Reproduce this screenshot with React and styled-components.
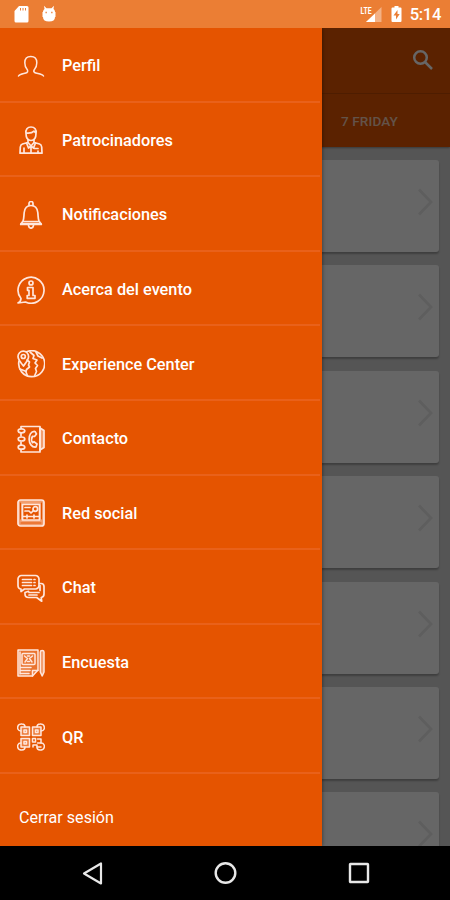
import React from "react"
import styled, { createGlobalStyle } from "styled-components"

const GlobalStyle = createGlobalStyle`
  * {
    box-sizing: border-box;
  }
  body {
    margin: 0;
    background: #000;
    font-family: Roboto, "Liberation Sans", sans-serif;
  }
`

const Screen = styled.div`
  display: flex;
  flex-direction: column;
  width: 450px;
  height: 900px;
  overflow: hidden;
`

const StatusBar = styled.header`
  display: flex;
  flex: none;
  align-items: center;
  justify-content: space-between;
  height: 28px;
  padding: 0 9px 0 13px;
  background: #eb7e34;
  color: white;
`

const StatusGroup = styled.div`
  display: flex;
  align-items: center;
  gap: ${props => props.$gap};
`

const Clock = styled.span`
  font-size: 16.6px;
  font-weight: 500;
  line-height: 20px;
  padding-top: 2px;
  letter-spacing: -0.35px;
`

const Body = styled.div`
  position: relative;
  flex: 1;
  min-height: 0;
  overflow: hidden;
`

const Page = styled.main`
  height: 100%;
  overflow: hidden;
  background: #d5d5d5;
`

const Toolbar = styled.div`
  display: flex;
  align-items: center;
  justify-content: flex-end;
  height: 66px;
  padding: 0 15px 2px;
  background: #e45500;
  border-bottom: 1px solid #c94b00;
`

const TabBar = styled.div`
  display: flex;
  align-items: center;
  justify-content: flex-end;
  height: 53px;
  padding: 0 52px 0 0;
  background: #e45500;
  color: #ffffffb8;
  font-size: 13.6px;
  font-weight: 500;
  letter-spacing: 0.1px;
  box-shadow: 0 1px 2px #0005;
`

const Sessions = styled.div`
  display: flex;
  flex-direction: column;
  gap: 13.4px;
  padding: 13px 11.5px 0;
`

const Card = styled.div`
  display: flex;
  flex: 0 0 92px;
  align-items: center;
  justify-content: flex-end;
  padding: 0 6px 8px 0;
  background: white;
  border-radius: 3px;
  box-shadow: 0 2px 2px #0004;
`

const Scrim = styled.div`
  position: absolute;
  inset: 0;
  background: rgba(0, 0, 0, 0.6);
`

const Drawer = styled.nav`
  position: absolute;
  top: 0;
  bottom: 0;
  left: 0;
  width: 321.5px;
  padding-right: 1.5px;
  background: #e55400;
  color: white;
  box-shadow: 0 0 4px rgba(0, 0, 0, 0.5);
`

const MenuItem = styled.a`
  display: flex;
  align-items: center;
  gap: 17px;
  height: 74.6px;
  padding: 3px 0 0 17px;
  border-bottom: 2px solid #e9611a;
  font-size: 16.3px;
  font-weight: 500;
`

const MenuIcon = styled.svg`
  flex: none;
  width: 28px;
  height: 28px;
  fill: none;
  stroke: #ffe6dc;
  stroke-width: ${props => props.$weight || 1.7};
  stroke-linecap: round;
  stroke-linejoin: round;
`

const Logout = styled.a`
  display: block;
  padding: 34px 19px 0;
  font-size: 16.1px;
  line-height: 20px;
`

const NavBar = styled.footer`
  display: flex;
  flex: 0 0 54px;
  align-items: center;
  justify-content: space-between;
  padding: 0 79px 0 80px;
  background: black;
`

const icons = {
  profile: (
    <path d="M1.500 24c1.500-2.800 6.500-2.200 8.500-3.500 1-.8.8-2.300 0-3.300-1.500-1.700-2.200-3.500-2.200-6.500 0-4 2.200-6.200 6-6.200s6 2.200 6 6.200c0 3-.7 4.800-2.200 6.500-.8 1-1 2.500 0 3.300 2 1.300 7.400.7 8.900 3.500" />
  ),
  sponsor: (
    <>
      <path d="M9 7.500c-.7-4 1.500-6.500 5-6.500s5.800 2.500 5 6.500c0 4-1.800 7-5 7s-5-3-5-7zM9.200 7c3 .3 6.300-.2 7.800-1.800L19 7" />
      <path d="M11 13.500v3l3 3.500 3-3.500v-3M10.800 16.500L5.500 18C4 18.500 3.500 19.500 3.300 21L3 27.200h22L24.700 21c-.2-1.500-.7-2.500-2.200-3l-5.300-1.500M14 20v7M7 22v5M21 25v2M17.500 22.500H21M9.500 17l2 5 2.500-2 2.500 2 2-5" />
    </>
  ),
  bell: (
    <>
      <path d="M12 4V2.500a2 2 0 0 1 4 0V4M6 20c1-2 .8-5 1.200-8.500C7.700 7 10 4.500 14 4.500S20.300 7 20.800 11.500c.4 3.500.2 6.500 1.200 8.500l2.300 3.500H3.700zM6 20.500h16" />
      <path d="M4 22.500h20M11.500 24.500c.3 1.800 1.200 2.700 2.500 2.700s2.200-.9 2.500-2.700" />
    </>
  ),
  info: (
    <>
      <path d="M4 22.500A13 13 0 1 1 8.500 26L1 27c2-1.200 3-2.600 3-4.500z" />
      <circle cx="14" cy="7" r="2" />
      <path d="M10.500 11.500h5.500v8h2v2.800h-7.800v-2.800H12v-5.200h-1.500z" />
    </>
  ),
  globe: (
    <>
      <path d="M9.500 1.800A13 13 0 1 1 2 11" />
      <path d="M6.500 16C3.500 12.500 1 9.500 1 6.500a5.300 5.300 0 0 1 10.600 0c0 3-2.400 6-5.100 9.500z" />
      <circle cx="6.300" cy="6.500" r="2" />
      <path d="M10 10l2.500 2-1 3 1 2-3 2.500-.5 2.500 1.500 4M3 19l5 2M13 2l4 3.500-1 3 4 1.500-2 3 2.500 2.500-2 3 1 3-2 4.500M19 2l2 4 4 2" />
    </>
  ),
  contact: (
    <>
      <path fill="#ffe6dc80" d="M23 3l4 2.500v17L23 25z" />
      <path d="M4 3V1.500h19V27H4v-2M4 8v3M4 17v3" />
      <ellipse cx="4.500" cy="5.800" rx="3.300" ry="2" />
      <ellipse cx="4.500" cy="14" rx="3.300" ry="2" />
      <ellipse cx="4.500" cy="22.200" rx="3.300" ry="2" />
      <path d="M18 6.500c-8-1-8 16.500 1 15.500l1-3-3-2.300-1.500 1c-1.300-2.200-1.300-4.200 0-6.400l2 .2 2-2.500z" />
    </>
  ),
  social: (
    <>
      <path fill="#ffe6dc80" fillRule="evenodd" stroke="none" d="M1 1h26v26H1zM5.500 5.500V21h17V5.500z" />
      <rect x="1" y="1" width="26" height="26" rx="2.500" />
      <rect x="5.500" y="5.500" width="17" height="15.500" />
      <circle cx="18.300" cy="10" r="2.300" />
      <path d="M8 8.500h5M8 12h4l2 2 2-2M6 17.500h16M10 16v3M17 16v3" />
      <path stroke="#e55400" strokeWidth="1" d="M4 24h20M3.500 4v16M24.500 4v16" />
    </>
  ),
  chat: (
    <>
      <path d="M4.500 1.500h14A3.500 3.500 0 0 1 22 5v6.500a3.500 3.500 0 0 1-3.500 3.500H7.500L4 17.500V15c-2 0-3-1.500-3-3.500V5a3.500 3.500 0 0 1 3.500-3.500zM5.500 5.500h9M5.500 8.500h9M5.500 11.500h9M17 5.500h1M17 8.500h1M17 11.500h1" />
      <path d="M22.500 9.500H24c2 0 3 1.200 3 3V20c0 2-1 3.200-2.800 3.500l.5 3.700-5-3.700h-8C9 23.500 8 22 8 20v-1.500l3.500-1.200M12 18.500h10M12 21h8M23 11.500v5" />
    </>
  ),
  survey: (
    <>
      <path fill="#ffe6dc38" d="M1 1h20v20l-5.500 6H1z" />
      <path d="M3 3v22M15.500 27v-5.500H21M4 18.500h10M4 21.500h9M4 24.500h8" />
      <rect x="5" y="4.500" width="13" height="11" rx="1" />
      <path d="M7.500 7l3 2.500L8 13M15.500 7l-3 2.500L15 13M10.500 7h2M10.500 12.500h2" />
      <path fill="#ffe6dc80" d="M23.300 3c0-2 3.700-2 3.700 0v20l-1.800 4-1.900-4z" />
    </>
  ),
  qr: (
    <>
      <path d="M4 8C.5 8 .5 5 .8 3.500 1.200 1.500 3.500.8 5 1c2 0 3 1 3 3M20 4c0-2 1.200-3 3-3 1.500-.2 3.800.5 4.200 2.500.3 1.500.3 4.500-3.200 4.500M4 20c-3.500 0-3.500 3-3.200 4.500.4 2 2.700 2.700 4.200 2.500 2 0 3-1 3-3M20 24c0 2 1.200 3 3 3 1.500.2 3.800-.5 4.200-2.500.3-1.500.3-4.500-3.200-4.500" />
      <path fill="#ffe6dc48" d="M4 4h8.500v8.500H4zM15.500 4H24v8.500h-8.500zM4 15.500h8.500V24H4z" />
      <path d="M15.500 15.500h3V19h-3zM20.500 16H24v4h-3.500M16 24v-2h4v2h4" />
      <path d="M7 7h2.500v2.500H7zM18.500 7H21v2.500h-2.500zM7 18.500h2.500V21H7z" />
    </>
  ),
}

const menu = [
  { icon: "profile", label: "Perfil", weight: 1.5 },
  { icon: "sponsor", label: "Patrocinadores" },
  { icon: "bell", label: "Notificaciones" },
  { icon: "info", label: "Acerca del evento" },
  { icon: "globe", label: "Experience Center" },
  { icon: "contact", label: "Contacto" },
  { icon: "social", label: "Red social" },
  { icon: "chat", label: "Chat" },
  { icon: "survey", label: "Encuesta", weight: 1.5 },
  { icon: "qr", label: "QR", weight: 1.5 },
]

const Status = () => (
  <StatusBar>
    <StatusGroup $gap="12px">
      <svg width="16" height="18" viewBox="0 0 16 18">
        <path fill="white" d="M6 1h8a1.500 1.500 0 0 1 1.500 1.500v13.500A1.500 1.500 0 0 1 14 17.500H3A1.500 1.500 0 0 1 1.500 16V6z" />
        <path stroke="#eb7e34" strokeWidth="1" d="M7.500 3v2.500M10 3v2.500M12.500 3v2.500" />
      </svg>
      <svg width="16" height="18" viewBox="0 0 16 18">
        <path fill="white" d="M2 7c0-1.500.8-2.300 1.500-3L3 .8l2.500 2.500h5L13 .8 12.500 4c.8.700 1.500 1.500 1.500 3h.5v5H14c0 3-2 4.500-6 4.500S2 15 2 12h-.5V7z" />
        <path stroke="#eb7e34" strokeWidth="1.300" d="M4.500 7.500h1.300M10.200 7.500h1.300" />
      </svg>
    </StatusGroup>
    <StatusGroup $gap="9px">
      <svg width="22" height="18" viewBox="0 0 22 18">
        <path fill="#fff6" d="M21.500 2v15H6z" />
        <path fill="white" d="M15 8.500V17H6z" />
        <text x="0.500" y="8.500" fill="white" fontSize="9.500" fontWeight="700" textLength="11" lengthAdjust="spacingAndGlyphs">LTE</text>
      </svg>
      <StatusGroup $gap="8px">
        <svg width="11" height="18" viewBox="0 0 11 18">
          <path fill="white" d="M3.500 1h4v1.500H9.500a1 1 0 0 1 1 1V16a1 1 0 0 1-1 1h-8a1 1 0 0 1-1-1V3.500a1 1 0 0 1 1-1h2z" />
          <path fill="#eb7e34" d="M6.500 5L2.500 10.500H5V14.500L8.700 9H6.500z" />
        </svg>
        <Clock>5:14</Clock>
      </StatusGroup>
    </StatusGroup>
  </StatusBar>
)

const App = () => (
  <>
    <GlobalStyle />
    <Screen>
      <Status />
      <Body>
        <Page>
          <Toolbar>
            <svg width="24" height="24" viewBox="0 0 24 24" fill="none" stroke="white" strokeWidth="2.500">
              <circle cx="9.500" cy="9.500" r="6.300" />
              <path d="M14 14l7 7" />
            </svg>
          </Toolbar>
          <TabBar>7 FRIDAY</TabBar>
          <Sessions>
            {[1, 2, 3, 4, 5, 6, 7].map(n => (
              <Card key={n}>
                <svg width="16" height="28" viewBox="0 0 16 28" fill="none" stroke="#ebebeb" strokeWidth="2.800">
                  <path d="M2 1.500L14 14 2 26.500" />
                </svg>
              </Card>
            ))}
          </Sessions>
        </Page>
        <Scrim />
        <Drawer>
          {menu.map(item => (
            <MenuItem key={item.label}>
              <MenuIcon viewBox="0 0 28 28" $weight={item.weight}>{icons[item.icon]}</MenuIcon>
              {item.label}
            </MenuItem>
          ))}
          <Logout>Cerrar sesión</Logout>
        </Drawer>
      </Body>
      <NavBar>
        <svg width="24" height="24" viewBox="0 0 24 24" fill="none" stroke="#e8e8e8" strokeWidth="2.200">
          <path d="M21 2.500v20L4 12.500z" strokeLinejoin="round" />
        </svg>
        <svg width="24" height="24" viewBox="0 0 24 24" fill="none" stroke="#e8e8e8" strokeWidth="2.400">
          <circle cx="11.500" cy="12" r="9.800" />
        </svg>
        <svg width="24" height="24" viewBox="0 0 24 24" fill="none" stroke="#e8e8e8" strokeWidth="2.400">
          <rect x="3" y="3" width="18" height="18" rx="0.500" />
        </svg>
      </NavBar>
    </Screen>
  </>
)

export default App
